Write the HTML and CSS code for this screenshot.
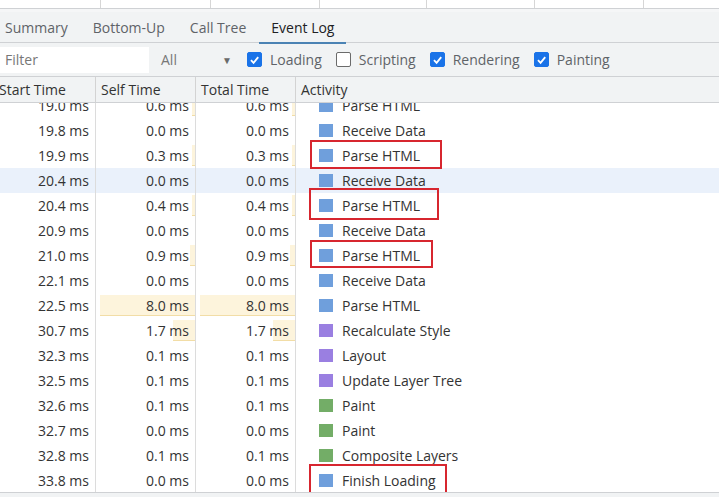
FILE: index.html
```html
<!DOCTYPE html>
<html>
<head>
<meta charset="utf-8">
<link rel="stylesheet" href="styles.css">
</head>
<body>
<div class="strip">
  <div class="strip-cell"><span class="cut">Name</span></div>
  <div class="strip-cell"></div>
  <div class="strip-cell"></div>
  <div class="strip-cell"></div>
  <div class="strip-cell"></div>
  <div class="strip-cell"></div>
  <div class="strip-cell last"></div>
</div>
<div class="tabs">
  <div class="tab">Summary</div>
  <div class="tab">Bottom-Up</div>
  <div class="tab">Call Tree</div>
  <div class="tab active">Event Log</div>
</div>
<div class="toolbar">
  <div class="filter">Filter</div>
  <div class="select"><span>All</span><span class="arrow">▼</span></div>
  <label class="check on"><span class="box"><svg viewBox="0 0 14 14" width="14" height="14"><path d="M3.2 7.2 L6 10 L11 4" fill="none" stroke="#fff" stroke-width="2"/></svg></span>Loading</label>
  <label class="check"><span class="box"></span>Scripting</label>
  <label class="check on"><span class="box"><svg viewBox="0 0 14 14" width="14" height="14"><path d="M3.2 7.2 L6 10 L11 4" fill="none" stroke="#fff" stroke-width="2"/></svg></span>Rendering</label>
  <label class="check on"><span class="box"><svg viewBox="0 0 14 14" width="14" height="14"><path d="M3.2 7.2 L6 10 L11 4" fill="none" stroke="#fff" stroke-width="2"/></svg></span>Painting</label>
</div>
<div class="thead">
  <div class="th first">Start Time</div>
  <div class="th">Self Time</div>
  <div class="th">Total Time</div>
  <div class="th act">Activity</div>
</div>
<div class="tbody">
  <div class="rows">
    <div class="row"><div class="c num">19.0 ms</div><div class="c num"><i class="bar" style="width:3px"></i><span>0.6 ms</span></div><div class="c num"><i class="bar" style="width:3px"></i><span>0.6 ms</span></div><div class="c act"><b class="ic load"></b>Parse HTML</div></div>
    <div class="row"><div class="c num">19.8 ms</div><div class="c num"><span>0.0 ms</span></div><div class="c num"><span>0.0 ms</span></div><div class="c act"><b class="ic load"></b>Receive Data</div></div>
    <div class="row"><div class="c num">19.9 ms</div><div class="c num"><i class="bar" style="width:3px"></i><span>0.3 ms</span></div><div class="c num"><i class="bar" style="width:3px"></i><span>0.3 ms</span></div><div class="c act"><b class="ic load"></b>Parse HTML</div></div>
    <div class="row sel"><div class="c num">20.4 ms</div><div class="c num"><span>0.0 ms</span></div><div class="c num"><span>0.0 ms</span></div><div class="c act"><b class="ic load"></b>Receive Data</div></div>
    <div class="row"><div class="c num">20.4 ms</div><div class="c num"><i class="bar" style="width:3px"></i><span>0.4 ms</span></div><div class="c num"><i class="bar" style="width:3px"></i><span>0.4 ms</span></div><div class="c act"><b class="ic load"></b>Parse HTML</div></div>
    <div class="row"><div class="c num">20.9 ms</div><div class="c num"><span>0.0 ms</span></div><div class="c num"><span>0.0 ms</span></div><div class="c act"><b class="ic load"></b>Receive Data</div></div>
    <div class="row"><div class="c num">21.0 ms</div><div class="c num"><i class="bar" style="width:5px"></i><span>0.9 ms</span></div><div class="c num"><i class="bar" style="width:5px"></i><span>0.9 ms</span></div><div class="c act"><b class="ic load"></b>Parse HTML</div></div>
    <div class="row"><div class="c num">22.1 ms</div><div class="c num"><span>0.0 ms</span></div><div class="c num"><span>0.0 ms</span></div><div class="c act"><b class="ic load"></b>Receive Data</div></div>
    <div class="row"><div class="c num">22.5 ms</div><div class="c num"><i class="bar" style="width:95px"></i><span>8.0 ms</span></div><div class="c num"><i class="bar" style="width:95px"></i><span>8.0 ms</span></div><div class="c act"><b class="ic load"></b>Parse HTML</div></div>
    <div class="row"><div class="c num">30.7 ms</div><div class="c num"><i class="bar" style="width:22px"></i><span>1.7 ms</span></div><div class="c num"><i class="bar" style="width:22px"></i><span>1.7 ms</span></div><div class="c act"><b class="ic rend"></b>Recalculate Style</div></div>
    <div class="row"><div class="c num">32.3 ms</div><div class="c num"><span>0.1 ms</span></div><div class="c num"><span>0.1 ms</span></div><div class="c act"><b class="ic rend"></b>Layout</div></div>
    <div class="row"><div class="c num">32.5 ms</div><div class="c num"><span>0.1 ms</span></div><div class="c num"><span>0.1 ms</span></div><div class="c act"><b class="ic rend"></b>Update Layer Tree</div></div>
    <div class="row"><div class="c num">32.6 ms</div><div class="c num"><span>0.1 ms</span></div><div class="c num"><span>0.1 ms</span></div><div class="c act"><b class="ic paint"></b>Paint</div></div>
    <div class="row"><div class="c num">32.7 ms</div><div class="c num"><span>0.0 ms</span></div><div class="c num"><span>0.0 ms</span></div><div class="c act"><b class="ic paint"></b>Paint</div></div>
    <div class="row"><div class="c num">32.8 ms</div><div class="c num"><span>0.1 ms</span></div><div class="c num"><span>0.1 ms</span></div><div class="c act"><b class="ic paint"></b>Composite Layers</div></div>
    <div class="row"><div class="c num">33.8 ms</div><div class="c num"><span>0.0 ms</span></div><div class="c num"><span>0.0 ms</span></div><div class="c act"><b class="ic load"></b>Finish Loading</div></div>
  </div>
  <div class="mark m1"></div>
  <div class="mark m2"></div>
  <div class="mark m3"></div>
  <div class="mark m4"></div>
</div>
<div class="foot"></div>
</body>
</html>
```

FILE: styles.css
```css
* { box-sizing: border-box; }
html, body { margin: 0; padding: 0; }
body {
  width: 719px;
  height: 497px;
  overflow: hidden;
  font-family: "Open Sans", "Noto Sans", sans-serif;
  font-size: 14px;
  color: #333;
  background: #fff;
}
.strip {
  display: grid;
  grid-template-columns: 101px 110px 109px 107px 108px 109px 1fr;
  height: 9px;
  border-bottom: 1px solid #cfd1d4;
  background: #fff;
  overflow: hidden;
}
.strip-cell { border-right: 1px solid #d6d6d6; overflow: hidden; }
.strip-cell.last { border-right: none; }
.cut {
  display: block;
  margin-top: -14px;
  padding-left: 16px;
  font-size: 14px;
  color: #333;
  line-height: 18px;
}
.tabs {
  display: flex;
  height: 34px;
  background: #f1f3f4;
  border-bottom: 1px solid #cfd1d4;
  padding-left: 5px;
  padding-top: 2px;
  gap: 25px;
  border-top: 3px solid #f5f6f7;
}
.tab {
  font-size: 14px;
  line-height: 28px;
  color: #5f6368;
  position: relative;
}
.tab.active { color: #202124; }
.tab.active::after {
  content: "";
  position: absolute;
  left: -12px;
  right: -12px;
  bottom: -2px;
  height: 2px;
  background: #4b83b4;
}
.toolbar {
  display: flex;
  align-items: center;
  height: 34px;
  background: #f1f3f4;
  border-bottom: 1px solid #cfd1d4;
}
.filter {
  width: 149px;
  height: 26px;
  background: #fff;
  color: #777;
  line-height: 26px;
  padding-left: 5px;
  font-size: 14px;
  margin-top: 1px;
}
.select {
  display: flex;
  width: 98px;
  padding-left: 12px;
  color: #777;
  align-items: center;
}
.select .arrow {
  font-size: 10px;
  color: #6a6a6a;
  margin-left: 45px;
}
.check {
  display: flex;
  align-items: center;
  color: #5f6368;
  margin-right: 14px;
}
.check .box {
  width: 15px;
  height: 15px;
  border-radius: 2px;
  border: 1.5px solid #6b6b6b;
  background: #fff;
  margin-right: 8px;
  display: flex;
  align-items: center;
  justify-content: center;
}
.check.on .box {
  background: #1a73e8;
  border-color: #1a73e8;
}
.check .box svg { display: block; }
.thead {
  display: grid;
  grid-template-columns: 96px 100px 100px 1fr;
  height: 26px;
  background: #f1f3f4;
  border-bottom: 1px solid #cfd1d4;
}
.th {
  border-right: 1px solid #d3d3d3;
  line-height: 25px;
  padding-left: 5px;
  color: #333;
}
.th.first { padding-left: 0; margin-left: -1px; }
.th.act { border-right: none; }
.tbody {
  position: relative;
  height: 390px;
  overflow: hidden;
  border-bottom: 1px solid #cfd1d4;
}
.rows { margin-top: -10px; }
.row {
  display: grid;
  grid-template-columns: 96px 100px 100px 1fr;
  height: 25px;
}
.row.sel { background: #eaf1fb; }
.c {
  border-right: 1px solid #dcdcdc;
  line-height: 25px;
  position: relative;
}
.c.num { text-align: right; padding-right: 6px; }
.c.num span { position: relative; }
.bar {
  position: absolute;
  right: 0;
  top: 2px;
  bottom: 2px;
  background: #fdf4dc;
  border-bottom: 1px solid #f2dda6;
}
.c.act {
  border-right: none;
  display: flex;
  align-items: center;
  padding-left: 23px;
}
.ic {
  width: 14px;
  height: 13px;
  margin-right: 9px;
  flex: none;
}
.ic.load { background: #6f9fdc; }
.ic.rend { background: #9a7fe1; }
.ic.paint { background: #73ad67; }
.mark {
  position: absolute;
  border: 2px solid #d7262f;
}
.m1 { left: 310px; top: 37px; width: 132px; height: 29px; }
.m2 { left: 309px; top: 85px; width: 130px; height: 32px; }
.m3 { left: 310px; top: 137px; width: 123px; height: 28px; }
.m4 { left: 309px; top: 361px; width: 138px; height: 31px; }
.foot { height: 6px; background: #f1f3f4; }
```
